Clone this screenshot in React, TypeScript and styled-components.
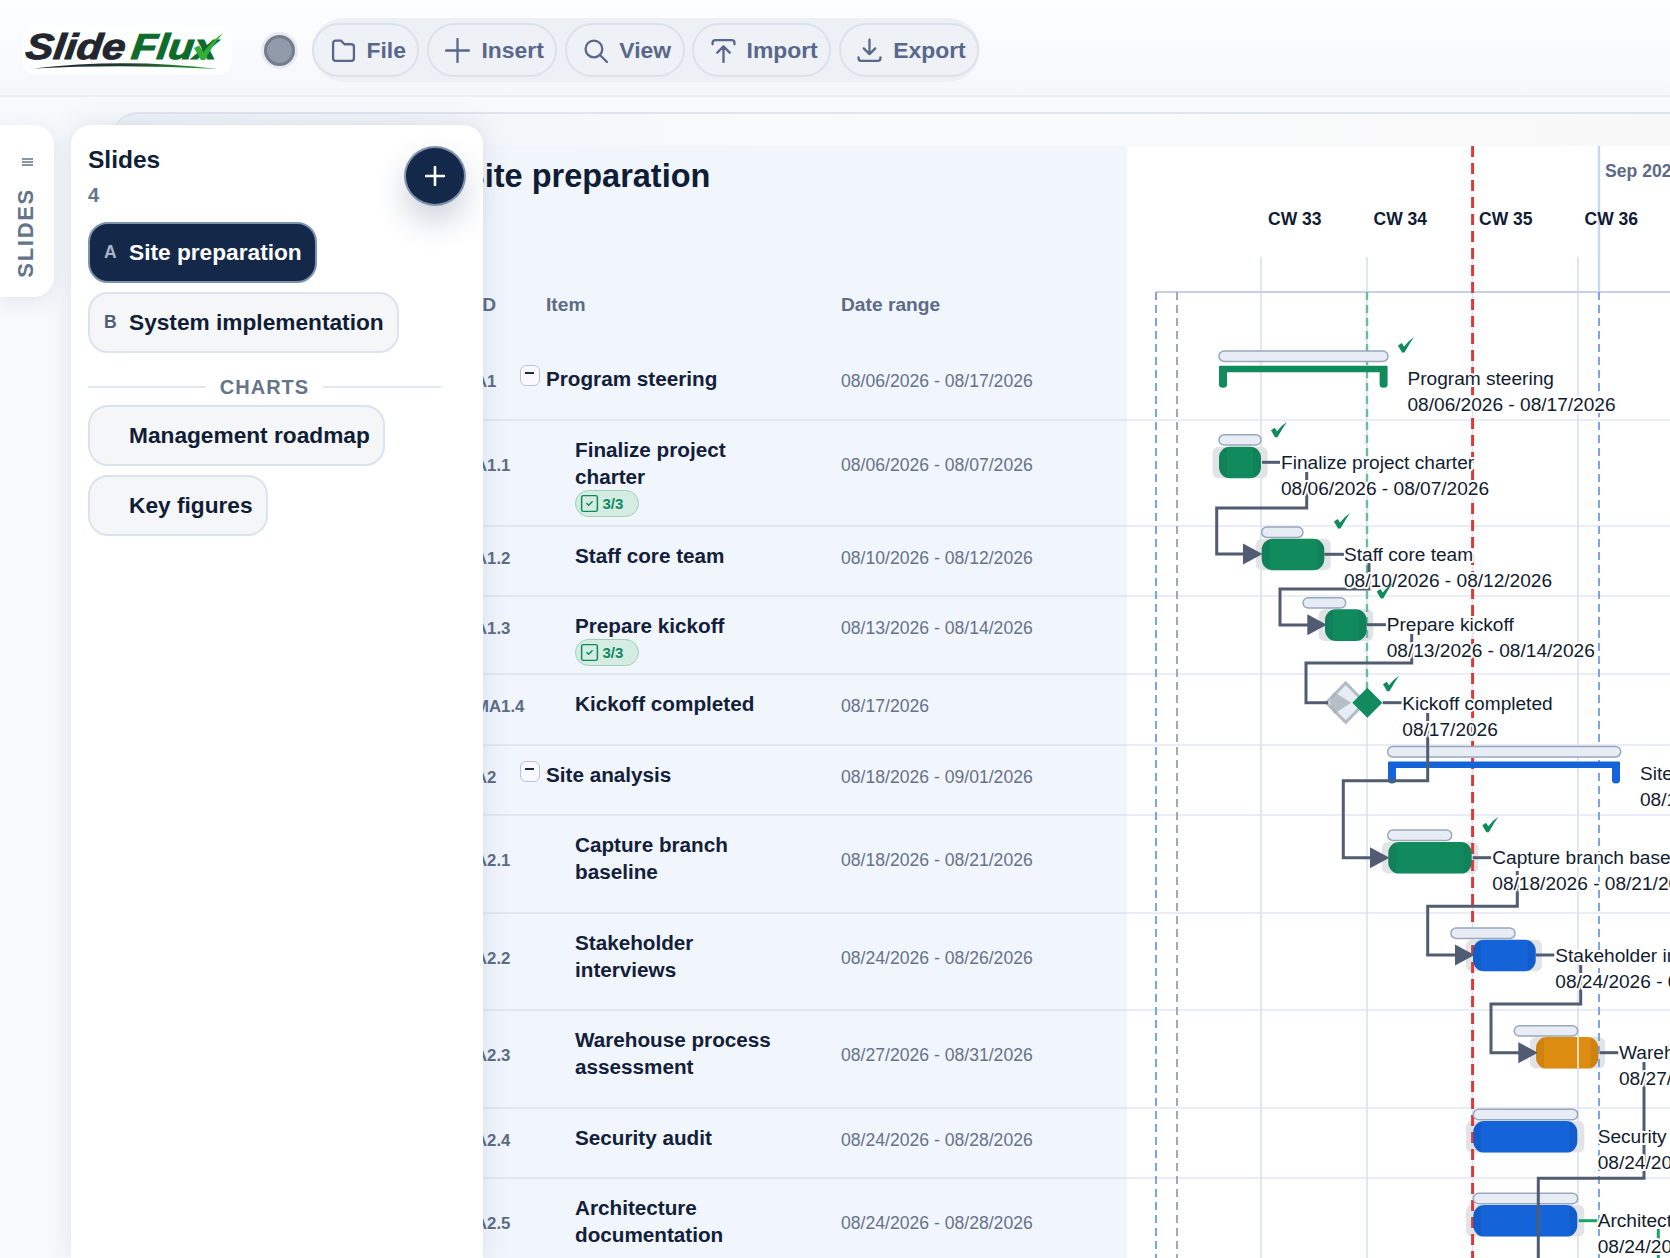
import styled, { createGlobalStyle } from 'styled-components';
import { SquareCheck } from 'lucide-react';

const GlobalStyle = createGlobalStyle`
  html, body {
    margin: 0;
    height: 100%;
    overflow: hidden;
  }
  body {
    font-family: "Liberation Sans", Arial, sans-serif;
    color: #101d36;
  }
  #root {
    height: 100%;
  }
  * {
    box-sizing: border-box;
  }
`;

const Page = styled.div`
  height: 100vh;
  display: flex;
  flex-direction: column;
  overflow: hidden;
  background: #f7f9fc;
`;

const TopBar = styled.header`
  height: 97px;
  flex: none;
  display: flex;
  align-items: center;
  padding: 5px 0 0 22px;
  background: linear-gradient(180deg, #fdfeff 0%, #f5f7fb 100%);
  border-bottom: 2px solid #ebeff5;
`;

const Logo = styled.div`
  position: relative;
  width: 210px;
  height: 50px;
  flex: none;
  background: #fdfefe;
  border-radius: 14px;
`;

const LogoText = styled.div`
  position: absolute;
  left: 4px;
  top: 1px;
  display: flex;
  font-size: 36px;
  line-height: 42px;
  font-weight: 700;
  font-style: italic;
  white-space: nowrap;
  transform: scaleX(1.16) skewX(-6deg);
  transform-origin: left center;
`;

const LogoWord = styled.span<{ $color: string; $gap?: number }>`
  color: ${(props) => props.$color};
  -webkit-text-stroke: 1px ${(props) => props.$color};
  margin-left: ${(props) => props.$gap ?? 0}px;
`;

const LogoMark = styled.svg`
  position: absolute;
  left: 0;
  top: 0;
`;

const StatusDot = styled.div`
  width: 37px;
  height: 37px;
  margin-left: 29px;
  margin-right: 14px;
  flex: none;
  display: flex;
  align-items: center;
  justify-content: center;
  border-radius: 50%;
  background: #e7eaf0;

  &::after {
    content: '';
    width: 25px;
    height: 25px;
    border-radius: 50%;
    background: #919aa8;
    border: 3px solid #747d8c;
  }
`;

const Menu = styled.nav`
  display: flex;
  gap: 7.5px;
  padding: 5px 1px 5px 0;
  background: #edf0f5;
  border-radius: 32px;
`;

const MenuButton = styled.div`
  height: 54px;
  display: flex;
  align-items: center;
  gap: 11px;
  padding: 0 11.5px 0 16.5px;
  border: 2px solid #dce2ec;
  border-radius: 27px;
  background: #eef1f6;
  color: #59688a;
  font-size: 22.9px;
  font-weight: 700;

  svg {
    width: 25px;
    height: 25px;
    flex: none;
    fill: none;
    stroke: #59688a;
    stroke-width: 2.2;
    stroke-linecap: round;
    stroke-linejoin: round;
  }
`;

const Workspace = styled.main`
  position: relative;
  flex: 1;
  min-height: 0;
  padding: 15px 0 0 112px;
  overflow: hidden;
`;

const Card = styled.section`
  height: 100%;
  display: flex;
  flex-direction: column;
  border-top: 2px solid #dfe5ee;
  border-top-left-radius: 26px;
  background: linear-gradient(90deg, #eef2f8 0%, #f9fafb 45%, #f8f8f9 100%);
  padding-top: 32px;
  overflow: hidden;
`;

const CardBody = styled.div`
  flex: 1;
  min-height: 0;
  display: flex;
`;

const TablePane = styled.div`
  width: 1015px;
  flex: none;
  background: #f1f5fc;
  overflow: hidden;
`;

const SheetTitle = styled.h1`
  margin: 0;
  height: 60px;
  padding-left: 351px;
  font-size: 32.5px;
  line-height: 60px;
  font-weight: 700;
  color: #101d36;
`;

const HeaderRow = styled.div`
  height: 144px;
  display: grid;
  grid-template-columns: 72px 295px 1fr;
  padding: 86px 0 0 362px;
  font-size: 19.2px;
  line-height: 26px;
  font-weight: 700;
  color: #5d6b85;
`;

const HeaderId = styled.div`
  margin-left: 3px;
`;

const Row = styled.div<{ $h: number }>`
  height: ${(props) => props.$h}px;
  display: grid;
  grid-template-columns: 45px 27px 295px 1fr;
  grid-auto-rows: min-content;
  align-items: center;
  padding: 15px 0 0 362px;
  border-bottom: 2px solid #e3e7f3;
`;

const RowId = styled.div`
  margin: 6px 0 0 1px;
  font-size: 16.8px;
  font-weight: 700;
  color: #5d6b85;
  white-space: nowrap;
`;

const Toggle = styled.span`
  position: relative;
  align-self: start;
  width: 20px;
  height: 21px;
  margin-left: 1px;
  border: 1.5px solid #b9c3d5;
  border-radius: 6px;
  background: #f8faff;

  &::after {
    content: '';
    position: absolute;
    left: 4px;
    top: 6px;
    width: 9px;
    height: 2px;
    background: #1d2a44;
  }
`;

const RowTitle = styled.div<{ $child?: boolean }>`
  grid-column: 3;
  max-width: 212px;
  margin-left: ${(props) => (props.$child ? 29 : 0)}px;
  font-size: 20.7px;
  line-height: 27px;
  font-weight: 700;
  color: #13203a;
`;

const RowDate = styled.div`
  margin-top: 5px;
  font-size: 17.6px;
  color: #66728a;
`;

const Badge = styled.div`
  grid-column: 3;
  grid-row: 2;
  justify-self: start;
  width: 64px;
  height: 27px;
  margin-left: 29px;
  display: flex;
  align-items: center;
  gap: 2.5px;
  padding-left: 3px;
  border: 1.5px solid #9dd2b9;
  border-radius: 14px;
  background: #d4ece1;
  color: #0f8a5f;
  font-size: 15px;
  font-weight: 700;
`;

const GanttPane = styled.div`
  flex: 1;
  min-width: 0;
  background: #ffffff;
  overflow: hidden;

  svg {
    display: block;
  }
`;

const MonthLabel = styled.text`
  font-size: 17.6px;
  font-weight: 700;
  fill: #5d6b85;
`;

const WeekLabel = styled.text`
  font-size: 17.5px;
  font-weight: 700;
  fill: #101c33;
`;

const BarLabel = styled.text`
  font-size: 19.1px;
  fill: #111c30;
  paint-order: stroke;
  stroke: #ffffff;
  stroke-width: 4px;
  stroke-linejoin: round;
`;

const SideRail = styled.aside`
  position: absolute;
  left: 0;
  top: 28px;
  width: 54px;
  height: 172px;
  display: flex;
  flex-direction: column;
  align-items: center;
  padding-top: 33px;
  background: #ffffff;
  border-radius: 0 20px 20px 0;
  box-shadow: 0 4px 20px rgba(90, 110, 150, 0.14);
`;

const RailLabel = styled.div`
  margin: 22px 2px 0 0;
  writing-mode: vertical-rl;
  transform: rotate(180deg);
  font-size: 22px;
  font-weight: 700;
  letter-spacing: 1.7px;
  line-height: 24px;
  color: #64748b;
`;

const SlidesPanel = styled.aside`
  position: absolute;
  left: 71px;
  top: 28px;
  bottom: 0;
  width: 412px;
  padding: 21px 17px 0;
  background: #ffffff;
  border-radius: 20px 20px 0 0;
  box-shadow: 0 0 26px rgba(90, 110, 150, 0.16);
`;

const PanelHead = styled.div`
  height: 76px;
  display: flex;
  justify-content: space-between;
  align-items: flex-start;
`;

const PanelTitle = styled.div`
  font-size: 24.5px;
  line-height: 28px;
  font-weight: 700;
  color: #101d36;
`;

const PanelCount = styled.div`
  margin-top: 10px;
  font-size: 20px;
  line-height: 22px;
  font-weight: 700;
  color: #64748b;
`;

const AddButton = styled.div`
  width: 62px;
  height: 60px;
  display: flex;
  align-items: center;
  justify-content: center;
  border-radius: 50%;
  background: #14294a;
  border: 2px solid #7f93b0;
  box-shadow: 0 16px 30px rgba(40, 60, 100, 0.22);
`;

const TabList = styled.div`
  display: flex;
  flex-direction: column;
  align-items: flex-start;
  gap: 9px;
`;

const SlideTab = styled.div<{ $active?: boolean }>`
  height: 61px;
  display: flex;
  align-items: center;
  padding: 0 13.5px 1px 14px;
  border: 2px solid ${(props) => (props.$active ? '#7f93b0' : '#dbe3ee')};
  border-radius: 20px;
  background: ${(props) => (props.$active ? '#14294a' : '#f5f6f8')};
  color: ${(props) => (props.$active ? '#ffffff' : '#101d36')};
  font-size: 22.7px;
  font-weight: 700;
  white-space: nowrap;
`;

const TabLetter = styled.span<{ $active?: boolean }>`
  width: 25px;
  flex: none;
  font-size: 17.5px;
  color: ${(props) => (props.$active ? '#a9b4c6' : '#4f5d75')};
`;

const SectionDivider = styled.div`
  width: 353px;
  height: 22px;
  margin: 23px 0 7px;
  display: flex;
  align-items: center;
  gap: 14px;
  font-size: 20px;
  font-weight: 700;
  letter-spacing: 1px;
  color: #64748b;

  &::before,
  &::after {
    content: '';
    flex: 1;
    height: 2px;
    background: #e3e8f0;
  }
`;

const rows = [
  { id: 'A1', title: 'Program steering', date: '08/06/2026 - 08/17/2026', h: 71, group: true },
  { id: 'A1.1', title: 'Finalize project charter', date: '08/06/2026 - 08/07/2026', h: 106, badge: true },
  { id: 'A1.2', title: 'Staff core team', date: '08/10/2026 - 08/12/2026', h: 70 },
  { id: 'A1.3', title: 'Prepare kickoff', date: '08/13/2026 - 08/14/2026', h: 78, badge: true },
  { id: 'MA1.4', title: 'Kickoff completed', date: '08/17/2026', h: 71 },
  { id: 'A2', title: 'Site analysis', date: '08/18/2026 - 09/01/2026', h: 70, group: true },
  { id: 'A2.1', title: 'Capture branch baseline', date: '08/18/2026 - 08/21/2026', h: 98 },
  { id: 'A2.2', title: 'Stakeholder interviews', date: '08/24/2026 - 08/26/2026', h: 97 },
  { id: 'A2.3', title: 'Warehouse process assessment', date: '08/27/2026 - 08/31/2026', h: 98 },
  { id: 'A2.4', title: 'Security audit', date: '08/24/2026 - 08/28/2026', h: 70 },
  { id: 'A2.5', title: 'Architecture documentation', date: '08/24/2026 - 08/28/2026', h: 98 },
];

const GREEN = '#118a5e';
const BLUE = '#1463d9';
const ORANGE = '#dc8c10';
const LINE = '#515c72';

const gridX = [1261, 1367, 1472.6, 1578];
const dividerY = [420, 526, 596, 674, 745, 815, 913, 1010, 1108, 1178];

const tasks = [
  { base: [1219, 1261, 434.7], x: [1219, 1261], y: 446.7, pad: [1212.6, 1267.7], color: GREEN },
  { base: [1261.7, 1303, 527], x: [1261.7, 1324.3], y: 538.7, pad: [1255.7, 1330.7], color: GREEN },
  { base: [1303, 1345.7, 597.7], x: [1325, 1366.7], y: 609.3, pad: [1318.7, 1373.3], color: GREEN },
  { base: [1387.7, 1451.7, 830], x: [1388.3, 1471.7], y: 842, pad: [1382, 1478.3], color: GREEN },
  { base: [1451, 1515, 928], x: [1473, 1535.7], y: 939.7, pad: [1466, 1542], color: BLUE },
  { base: [1514.3, 1577.7, 1025.7], x: [1536, 1598.3], y: 1037, pad: [1530, 1605], color: ORANGE },
  { base: [1473.3, 1577.7, 1109.3], x: [1473.3, 1577.3], y: 1121, pad: [1466, 1584.3], color: BLUE },
  { base: [1473.3, 1577.7, 1193.3], x: [1473.3, 1577.3], y: 1205, pad: [1466, 1584.3], color: BLUE },
];

const labels = [
  { x: 1407.5, y: 378.7, name: 'Program steering', date: '08/06/2026 - 08/17/2026' },
  { x: 1281, y: 462.3, name: 'Finalize project charter', date: '08/06/2026 - 08/07/2026' },
  { x: 1344, y: 554.3, name: 'Staff core team', date: '08/10/2026 - 08/12/2026' },
  { x: 1386.7, y: 624.7, name: 'Prepare kickoff', date: '08/13/2026 - 08/14/2026' },
  { x: 1402.3, y: 703, name: 'Kickoff completed', date: '08/17/2026' },
  { x: 1640, y: 773.3, name: 'Site analysis', date: '08/18/2026 - 09/01/2026' },
  { x: 1492.3, y: 857.7, name: 'Capture branch baseline', date: '08/18/2026 - 08/21/2026' },
  { x: 1555.3, y: 955, name: 'Stakeholder interviews', date: '08/24/2026 - 08/26/2026' },
  { x: 1619, y: 1052.7, name: 'Warehouse process assessment', date: '08/27/2026 - 08/31/2026' },
  { x: 1597.7, y: 1136, name: 'Security audit', date: '08/24/2026 - 08/28/2026' },
  { x: 1597.7, y: 1220.7, name: 'Architecture documentation', date: '08/24/2026 - 08/28/2026' },
];

const connectors = [
  'M1306.7 472V508H1216.7V554H1245',
  'M1369 563V589H1280V625H1309',
  'M1411.7 634V663H1306V702.7H1328',
  'M1427.7 713V780.7H1343.3V857.7H1372',
  'M1517.3 871V906.3H1427.7V955H1457',
  'M1580.7 965V1004H1491V1052.7H1520',
  'M1644 1062V1178.3H1538.3V1258',
];

const stubs = [
  [1262, 1280, 462.3],
  [1324.3, 1344, 554.3],
  [1367, 1386, 624.7],
  [1382.7, 1401.7, 702.7],
  [1472.7, 1491.7, 857.7],
  [1535.7, 1554.3, 955],
  [1600, 1618.3, 1052.7],
];

const arrows = [
  [1243, 554],
  [1307.3, 624.7],
  [1370, 857.7],
  [1455, 955],
  [1518.3, 1052.7],
];

const checks = [
  [1398, 337],
  [1271, 421.7],
  [1334, 513],
  [1376.7, 583],
  [1383, 675.7],
  [1482.3, 816.7],
];

function Bracket({ x1, x2, y, color }: { x1: number; x2: number; y: number; color: string }) {
  return (
    <path
      fill={color}
      d={`M${x1 + 1} ${y}H${x2 - 1}Q${x2} ${y} ${x2} ${y + 1}V${y + 19}Q${x2} ${y + 22} ${x2 - 4} ${y + 22}Q${x2 - 8} ${y + 22} ${x2 - 8} ${y + 19}V${y + 6.5}H${x1 + 8}V${y + 19}Q${x1 + 8} ${y + 22} ${x1 + 4} ${y + 22}Q${x1} ${y + 22} ${x1} ${y + 19}V${y + 1}Q${x1} ${y} ${x1 + 1} ${y}Z`}
    />
  );
}

function Baseline({ x1, x2, y }: { x1: number; x2: number; y: number }) {
  return <rect x={x1} y={y} width={x2 - x1} height={10.4} rx={5.2} fill="#e8edf5" stroke="#9aa7bd" strokeWidth={1.5} />;
}

function Gantt() {
  return (
    <svg width={543} height={1112} viewBox="1127 146 543 1112">
      {dividerY.map((y) => (
        <line key={y} x1={1127} x2={1670} y1={y} y2={y} stroke="#e3e7f5" strokeWidth={1.6} />
      ))}
      {gridX.map((x) => (
        <line key={x} x1={x} x2={x} y1={257} y2={1258} stroke="#dfe3f3" strokeWidth={1.8} />
      ))}
      <line x1={1599} x2={1599} y1={146} y2={292} stroke="#c6d8f0" strokeWidth={2.4} />
      <line x1={1156} x2={1670} y1={292} y2={292} stroke="#c5d2e6" strokeWidth={2} />

      <MonthLabel x={1605} y={177}>Sep 2026</MonthLabel>
      {['CW 33', 'CW 34', 'CW 35', 'CW 36'].map((label, i) => (
        <WeekLabel key={label} x={1268 + i * 105.5} y={225}>{label}</WeekLabel>
      ))}

      {tasks.map((t) => (
        <rect key={t.y} x={t.pad[0]} y={t.y} width={t.pad[1] - t.pad[0]} height={31.6} rx={6} fill="#e2e3e6" />
      ))}

      <line x1={1156} x2={1156} y1={292} y2={1258} stroke="#7aa5ea" strokeWidth={2} strokeDasharray="8 5" />
      <line x1={1177} x2={1177} y1={292} y2={1258} stroke="#a3a9b4" strokeWidth={2} strokeDasharray="8 5" />
      <line x1={1599} x2={1599} y1={292} y2={1258} stroke="#7aa5ea" strokeWidth={2} strokeDasharray="8 5" />
      <line x1={1367} x2={1367} y1={292} y2={690} stroke="#6dbb9e" strokeWidth={2.4} strokeDasharray="8 5" />
      <line x1={1472.6} x2={1472.6} y1={146} y2={1258} stroke="#d93a3a" strokeWidth={3} strokeDasharray="11 6" />

      <Baseline x1={1219} x2={1388} y={351} />
      <Bracket x1={1219} x2={1387.6} y={365.7} color={GREEN} />
      <Baseline x1={1387.7} x2={1620.7} y={746.5} />
      <Bracket x1={1388} x2={1620} y={761.5} color={BLUE} />

      {tasks.map((t) => (
        <g key={t.y}>
          <Baseline x1={t.base[0]} x2={t.base[1]} y={t.base[2]} />
          <rect x={t.x[0]} y={t.y} width={t.x[1] - t.x[0]} height={31.6} rx={11} fill={t.color} />
          <path
            d={`M${t.x[0] + 8} ${t.y}A11 11 0 0 0 ${t.x[0]} ${t.y + 11}V${t.y + 20.6}A11 11 0 0 0 ${t.x[0] + 8} ${t.y + 31.6}Z M${t.x[1] - 8} ${t.y}A11 11 0 0 1 ${t.x[1]} ${t.y + 11}V${t.y + 20.6}A11 11 0 0 1 ${t.x[1] - 8} ${t.y + 31.6}Z`}
            fill="#000000"
            opacity={0.06}
          />
        </g>
      ))}
      <line x1={1578} x2={1578} y1={1037} y2={1068.6} stroke="#f3e4cc" strokeWidth={1.8} />

      <path d="M1345.7 683L1365 702.7L1345.7 722.4L1326.4 702.7Z" fill="#e8edf5" stroke="#b4bac6" strokeWidth={3} />
      <path d="M1334 692L1351 702.7L1334 714L1330 702.7Z" fill="#aab1bd" opacity={0.8} />
      <path d="M1367.3 687.7L1382.3 702.7L1367.3 717.7L1352.3 702.7Z" fill={GREEN} />

      {connectors.map((d) => (
        <path key={d} d={d} fill="none" stroke={LINE} strokeWidth={3} />
      ))}
      {stubs.map((s) => (
        <line key={s[2]} x1={s[0]} x2={s[1]} y1={s[2]} y2={s[2]} stroke={LINE} strokeWidth={3} />
      ))}
      <line x1={1578.7} x2={1597.3} y1={1220.7} y2={1220.7} stroke="#1aa563" strokeWidth={3} />
      <line x1={1658.3} x2={1658.3} y1={1229} y2={1258} stroke="#1aa563" strokeWidth={3} />
      {arrows.map((a) => (
        <path key={a[0]} d={`M${a[0]} ${a[1] - 10.5}L${a[0] + 19.5} ${a[1]}L${a[0]} ${a[1] + 10.5}Z`} fill={LINE} />
      ))}

      {labels.map((l) => (
        <g key={l.name}>
          <BarLabel x={l.x} y={l.y + 6.5}>{l.name}</BarLabel>
          <BarLabel x={l.x} y={l.y + 32.5}>{l.date}</BarLabel>
        </g>
      ))}

      {checks.map((c) => (
        <path
          key={c[0]}
          transform={`translate(${c[0]} ${c[1]})`}
          d="M0 8.5L3.8 6L6 9.5Q10 4 16 0Q11.5 6.5 6.5 15.5H4Z"
          fill={GREEN}
        />
      ))}
    </svg>
  );
}

export default function App() {
  return (
    <>
      <GlobalStyle />
      <Page>
        <TopBar>
          <Logo>
            <LogoText>
              <LogoWord $color="#22262f">Slide</LogoWord>
              <LogoWord $color="#0f6b2c" $gap={5}>Flux</LogoWord>
            </LogoText>
            <LogoMark width={210} height={50} viewBox="22 25 210 50">
              <defs>
                <linearGradient id="swoosh" x1="0" x2="1" y1="0" y2="0">
                  <stop offset="0" stopColor="#23262f" />
                  <stop offset="0.5" stopColor="#1f3a30" />
                  <stop offset="1" stopColor="#2fae3a" />
                </linearGradient>
              </defs>
              <path d="M33 68.5Q125 58 218 69Q125 64 33 68.5Z" fill="url(#swoosh)" />
              <path d="M194 48L199 45.5L203.5 52Q212 41 223 33Q212 46 205 60H201Z" fill="#2fae3a" />
            </LogoMark>
          </Logo>
          <StatusDot />
          <Menu>
            <MenuButton>
              <svg viewBox="0 0 24 24">
                <path d="M2 5a2.5 2.5 0 0 1 2.5-2.5h5L13 6h6.5A2.5 2.5 0 0 1 22 8.5v11a2.5 2.5 0 0 1-2.5 2.5h-15A2.5 2.5 0 0 1 2 19.5Z" />
              </svg>
              File
            </MenuButton>
            <MenuButton>
              <svg viewBox="0 0 24 24">
                <path d="M12 1v22M1 12h22" />
              </svg>
              Insert
            </MenuButton>
            <MenuButton>
              <svg viewBox="0 0 24 24">
                <circle cx="10.5" cy="10.5" r="8" />
                <path d="M16.5 16.5L23 23" />
              </svg>
              View
            </MenuButton>
            <MenuButton>
              <svg viewBox="0 0 24 24">
                <path d="M1.5 6V4.5A2.5 2.5 0 0 1 4 2h16a2.5 2.5 0 0 1 2.5 2.5V6M12 23V9M6 14l6-6 6 6" />
              </svg>
              Import
            </MenuButton>
            <MenuButton>
              <svg viewBox="0 0 24 24">
                <path d="M12 1.5V15M6.5 10l5.5 5.5 5.5-5.5M1.5 18.5v1A2.5 2.5 0 0 0 4 22h16a2.5 2.5 0 0 0 2.5-2.5v-1" />
              </svg>
              Export
            </MenuButton>
          </Menu>
        </TopBar>

        <Workspace>
          <Card>
            <CardBody>
              <TablePane>
                <SheetTitle>Site preparation</SheetTitle>
                <HeaderRow>
                  <HeaderId>ID</HeaderId>
                  <div>Item</div>
                  <div>Date range</div>
                </HeaderRow>
                {rows.map((row) => (
                  <Row key={row.id} $h={row.h}>
                    <RowId>{row.id}</RowId>
                    {row.group ? <Toggle /> : <span />}
                    <RowTitle $child={!row.group}>{row.title}</RowTitle>
                    <RowDate>{row.date}</RowDate>
                    {row.badge && (
                      <Badge>
                        <SquareCheck size={21} strokeWidth={1.7} />
                        3/3
                      </Badge>
                    )}
                  </Row>
                ))}
              </TablePane>
              <GanttPane>
                <Gantt />
              </GanttPane>
            </CardBody>
          </Card>

          <SideRail>
            <svg width={11} height={8} viewBox="0 0 11 8">
              <path d="M0 1H11M0 4H11M0 7H11" stroke="#64748b" strokeWidth={1.3} />
            </svg>
            <RailLabel>SLIDES</RailLabel>
          </SideRail>

          <SlidesPanel>
            <PanelHead>
              <div>
                <PanelTitle>Slides</PanelTitle>
                <PanelCount>4</PanelCount>
              </div>
              <AddButton>
                <svg width={20} height={20} viewBox="0 0 20 20">
                  <path d="M10 1V19M1 10H19" stroke="#ffffff" strokeWidth={2.6} strokeLinecap="round" />
                </svg>
              </AddButton>
            </PanelHead>
            <TabList>
              <SlideTab $active>
                <TabLetter $active>A</TabLetter>
                Site preparation
              </SlideTab>
              <SlideTab>
                <TabLetter>B</TabLetter>
                System implementation
              </SlideTab>
            </TabList>
            <SectionDivider>CHARTS</SectionDivider>
            <TabList>
              <SlideTab>
                <TabLetter />
                Management roadmap
              </SlideTab>
              <SlideTab>
                <TabLetter />
                Key figures
              </SlideTab>
            </TabList>
          </SlidesPanel>
        </Workspace>
      </Page>
    </>
  );
}
